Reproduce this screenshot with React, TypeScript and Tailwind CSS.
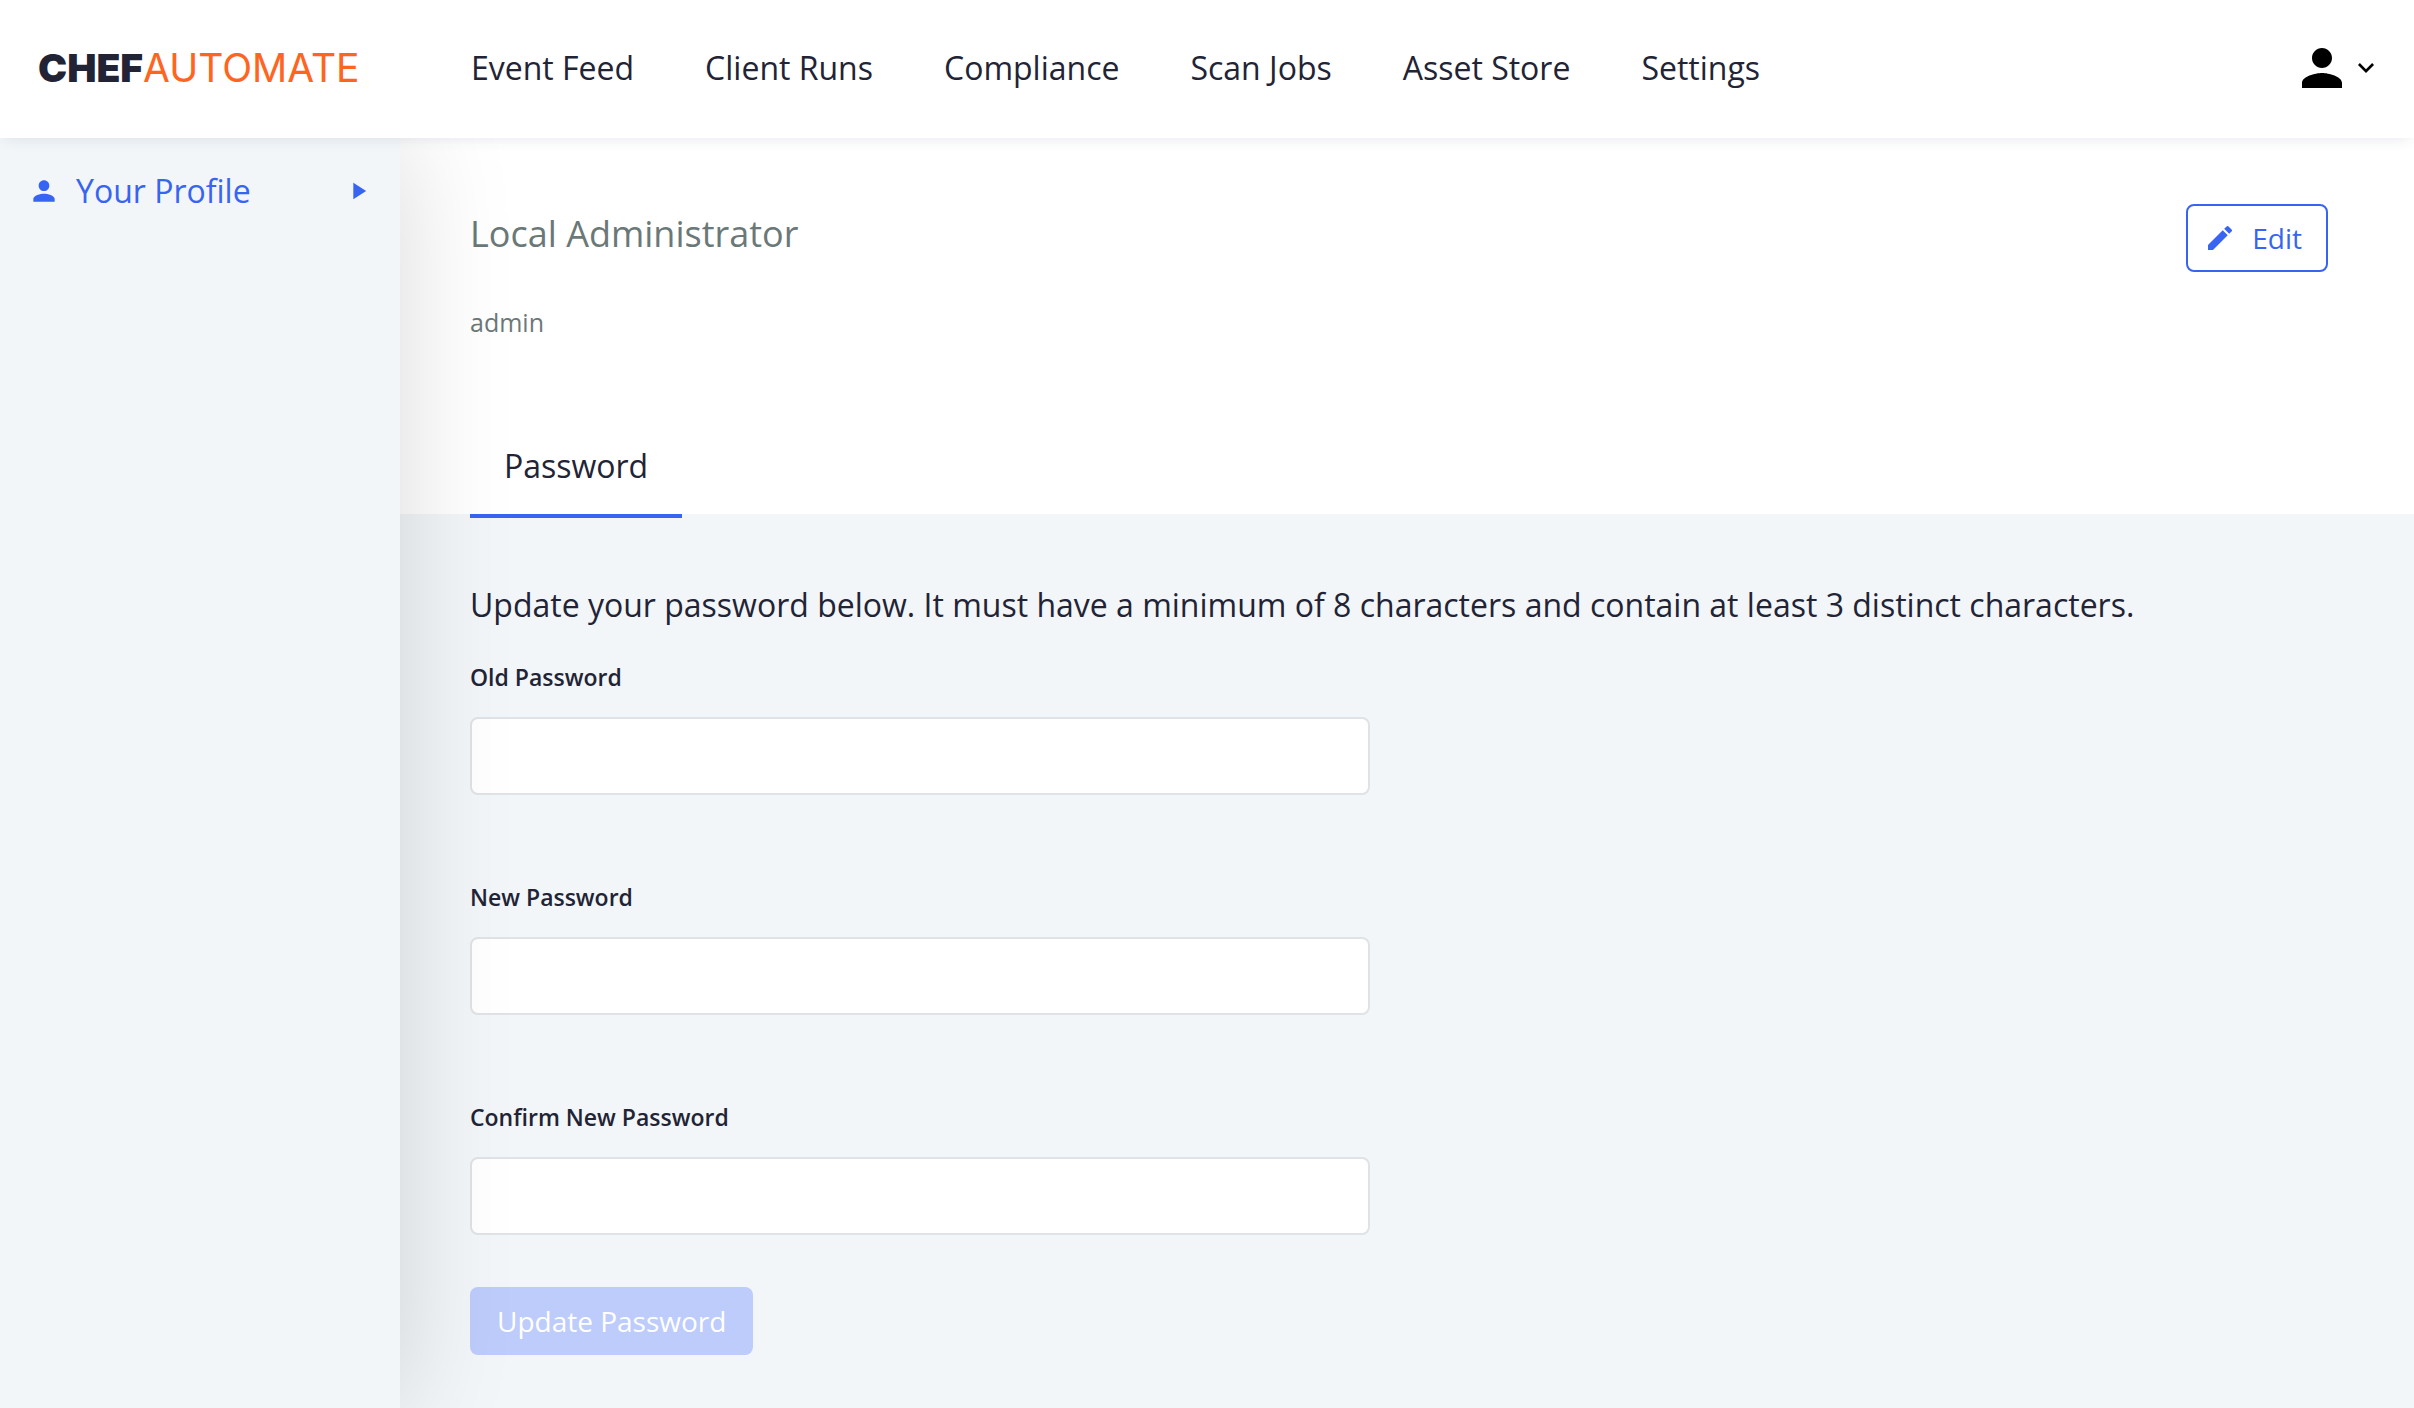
import { MdEdit, MdPerson, MdPlayArrow } from 'react-icons/md'

const navItems = ['Event Feed', 'Client Runs', 'Compliance', 'Scan Jobs', 'Asset Store', 'Settings']

const fields = [
  { id: 'old-password', label: 'Old Password' },
  { id: 'new-password', label: 'New Password' },
  { id: 'confirm-password', label: 'Confirm New Password' },
]

function Header() {
  return (
    <header className="relative z-20 flex h-[138px] items-center bg-white pr-10 pb-0.5 shadow-[0_4px_14px_-4px_rgba(40,60,90,0.12)]">
      <div className="w-[400px] shrink-0 pl-[38px]">
        <a href="#" className="font-['Inter'] text-[39px] leading-10 whitespace-nowrap">
          <span className="font-black text-[#222435]">CHEF</span>
          <span className="text-[#ff6420]">AUTOMATE</span>
        </a>
      </div>
      <nav className="flex flex-1 gap-[71px] pl-[71px]">
        {navItems.map((item) => (
          <a key={item} href="#" className="text-[32px] leading-10 whitespace-nowrap">
            {item}
          </a>
        ))}
      </nav>
      <button type="button" aria-label="User menu" className="flex items-center gap-4 text-black">
        <svg viewBox="4 4 16 16" className="size-10" fill="currentColor" aria-hidden="true">
          <path d="M12 12c2.21 0 4-1.79 4-4s-1.79-4-4-4-4 1.79-4 4 1.79 4 4 4zm0 2c-2.67 0-8 1.34-8 4v2h16v-2c0-2.66-5.33-4-8-4z" />
        </svg>
        <svg viewBox="6 8.59 12 7.41" className="h-2.5 w-4" fill="currentColor" aria-hidden="true">
          <path d="M7.41 8.59L12 13.17l4.59-4.58L18 10l-6 6-6-6z" />
        </svg>
      </button>
    </header>
  )
}

function Sidebar() {
  return (
    <aside className="relative z-10 w-[400px] shrink-0 bg-[#f2f6f9] pt-[33px] shadow-[0_0_108px_rgba(0,5,10,0.15)]">
      <a href="#" className="flex items-center gap-4 px-7 text-[#3864f2]">
        <MdPerson className="size-8" />
        <span className="flex-1 text-[32px] leading-10">Your Profile</span>
        <MdPlayArrow className="size-7" />
      </a>
    </aside>
  )
}

export default function App() {
  return (
    <div className="flex min-h-screen flex-col overflow-hidden bg-[#f2f6f9] font-['Open_Sans',sans-serif] text-[#222435]">
      <Header />
      <div className="flex flex-1">
        <Sidebar />
        <main className="min-w-0 flex-1">
          <section className="flow-root bg-white pr-[86px] pl-[70px]">
            <div className="mt-[66px] flex items-start justify-between">
              <h1 className="text-[36px] leading-[60px] text-[#6b7878]">Local Administrator</h1>
              <button
                type="button"
                className="flex h-[68px] items-center gap-4 rounded-lg border-2 border-[#3864f2] pr-6 pl-4 text-[28px] leading-9 text-[#3864f2]"
              >
                <MdEdit className="size-8" />
                Edit
              </button>
            </div>
            <p className="mt-[30px] text-[25px] leading-10 text-[#6b7878]">admin</p>
            <div role="tablist" className="-mb-1 mt-[76px] flex">
              <button
                type="button"
                role="tab"
                aria-selected="true"
                className="min-w-[212px] border-b-4 border-[#3864f2] px-8 py-7 text-[32px] leading-10"
              >
                Password
              </button>
            </div>
          </section>
          <form className="pt-[71px] pr-[86px] pb-[53px] pl-[70px]">
            <p className="text-[32px] leading-10">
              Update your password below. It must have a minimum of 8 characters and contain at least 3 distinct
              characters.
            </p>
            <div className="mt-9 flex max-w-[900px] flex-col gap-[86px]">
              {fields.map(({ id, label }) => (
                <div key={id} className="flex flex-col gap-6">
                  <label htmlFor={id} className="text-[23px] leading-8 font-semibold">
                    {label}
                  </label>
                  <input
                    id={id}
                    type="password"
                    className="h-[78px] w-full rounded-lg border-2 border-[#dfe3e6] bg-white px-6 text-[28px]"
                  />
                </div>
              ))}
            </div>
            <button
              type="submit"
              disabled
              className="mt-[52px] h-[68px] rounded-lg bg-[#bdccfa] px-[27px] text-[28px] leading-9 text-white"
            >
              Update Password
            </button>
          </form>
        </main>
      </div>
    </div>
  )
}
